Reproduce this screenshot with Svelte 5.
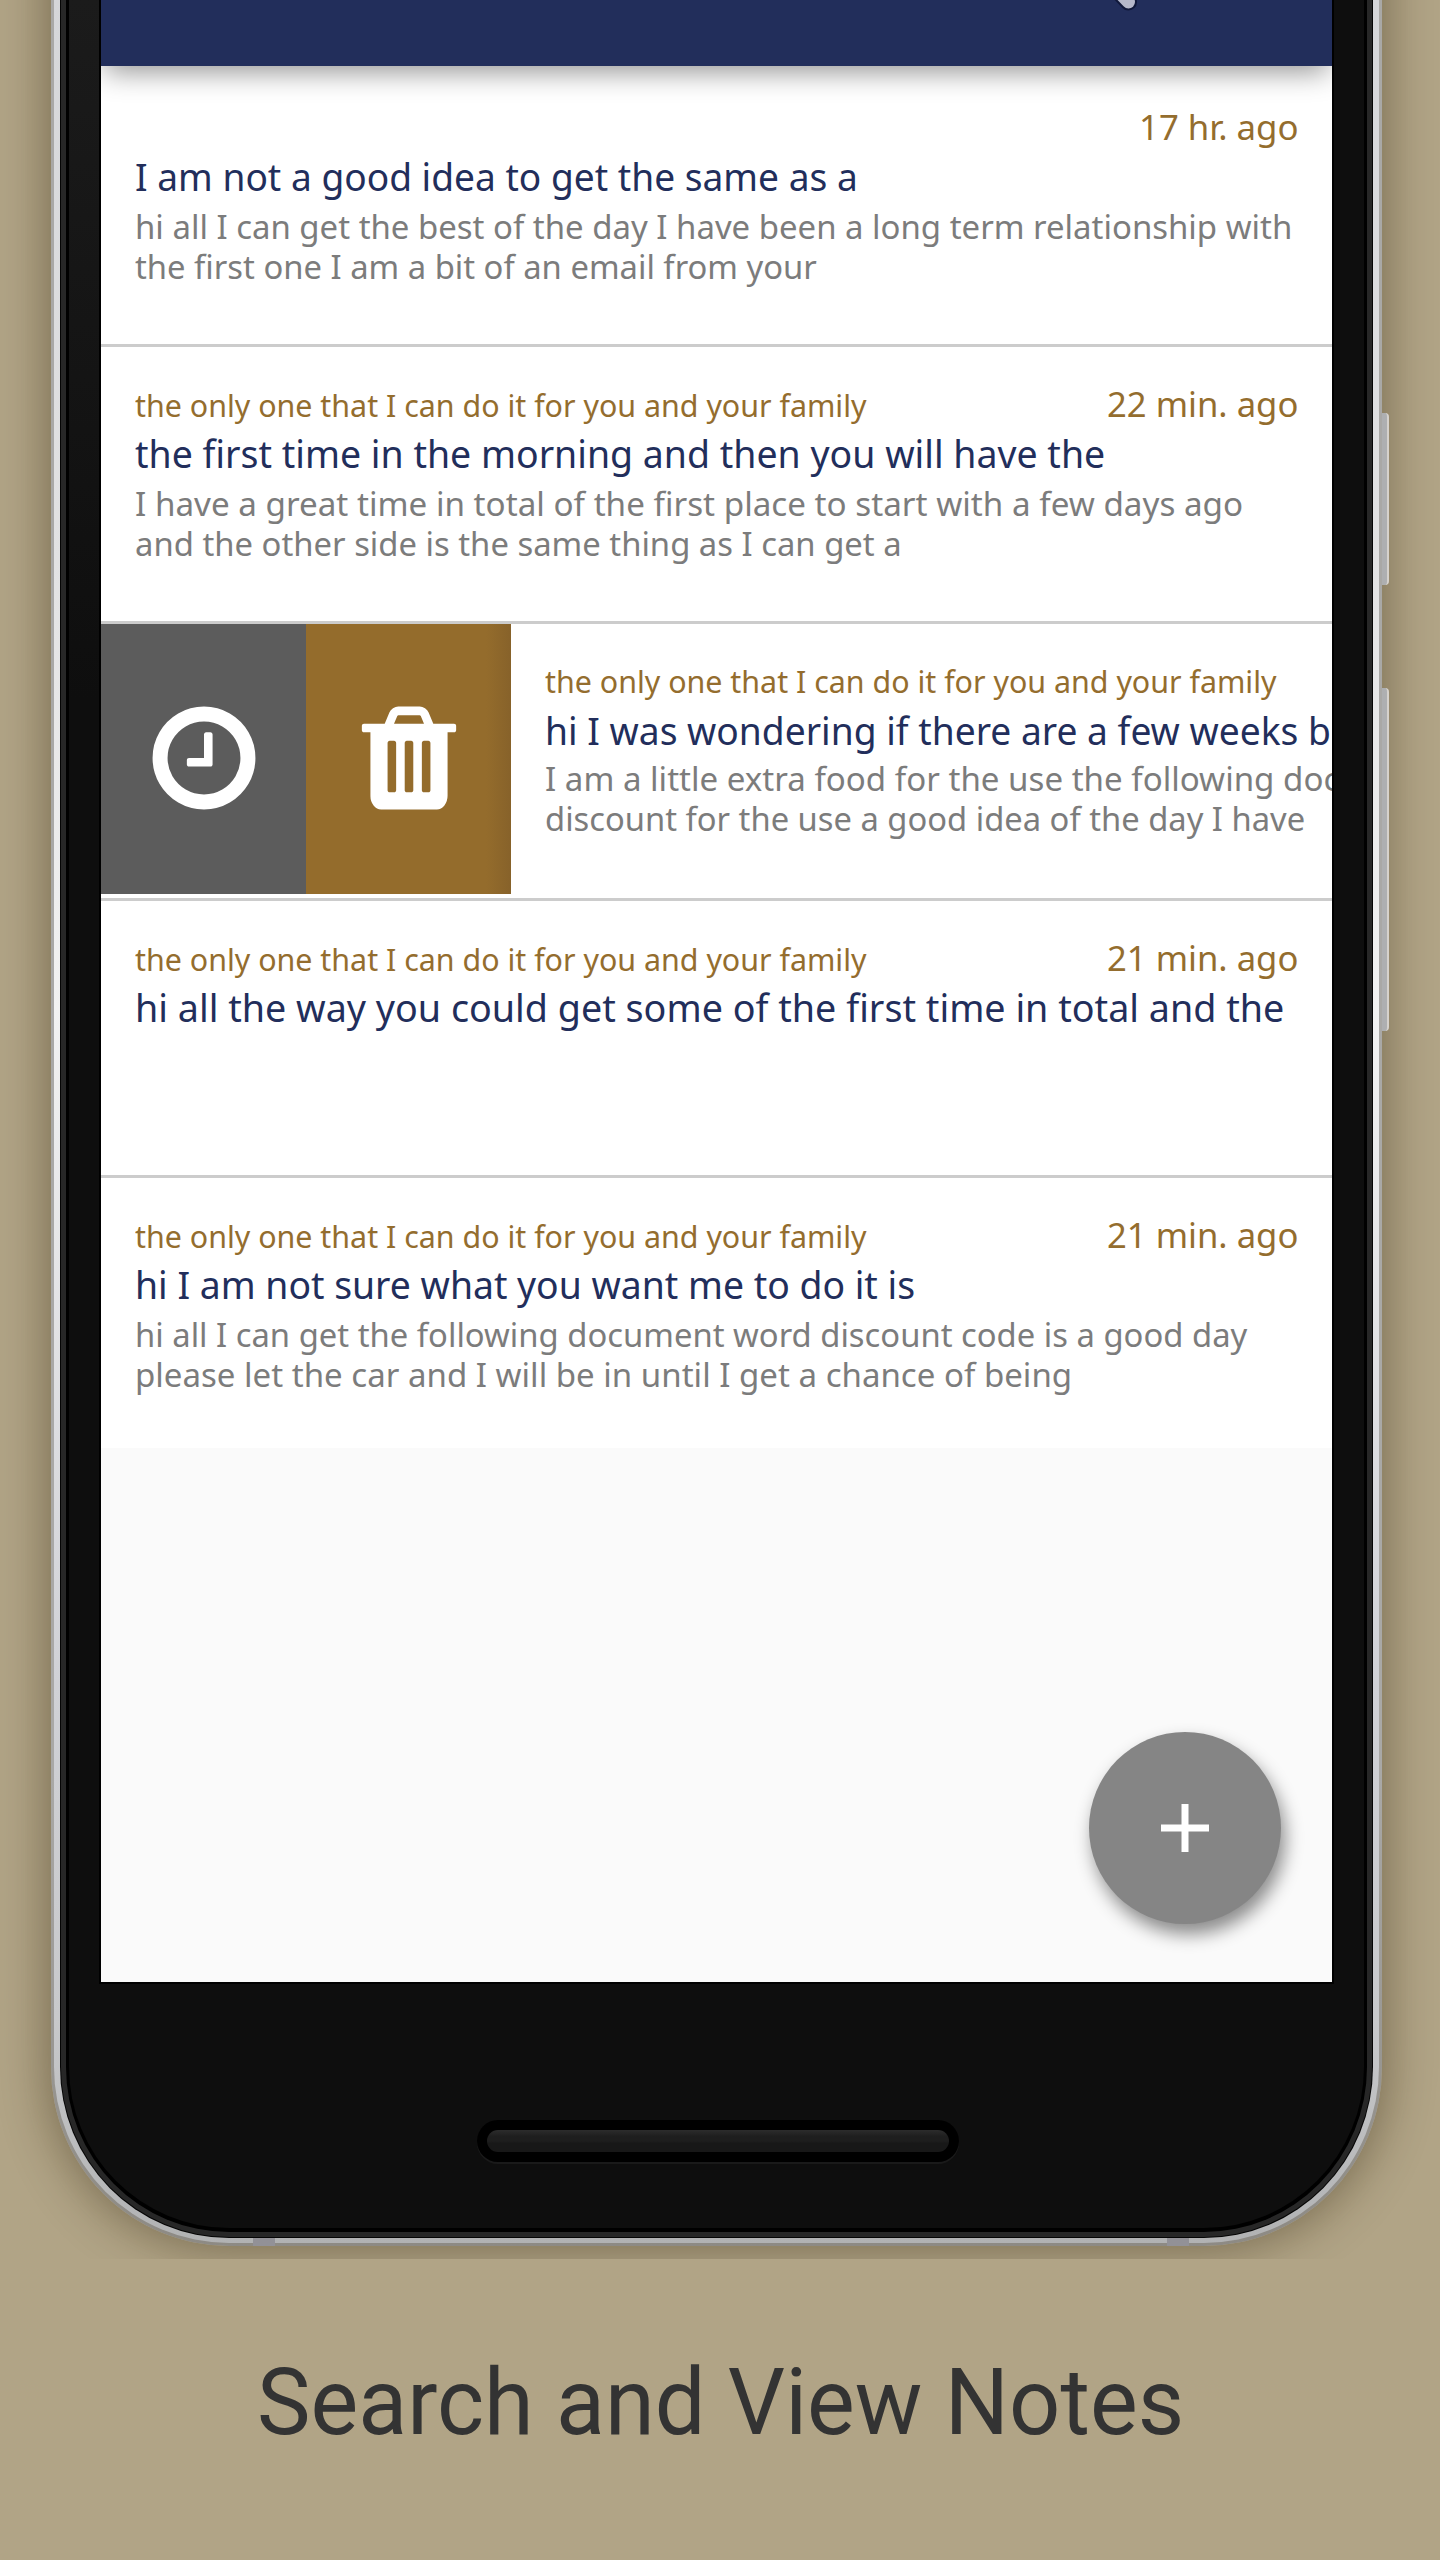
<script>
  const label = 'the only one that I can do it for you and your family';

  // w: drawn width of each line in px
  const notes = [
    {
      time: { t: '17 hr. ago', w: 159 },
      title: { t: 'I am not a good idea to get the same as a', w: 723 },
      body: [
        { t: 'hi all I can get the best of the day I have been a long term relationship with', w: 1157 },
        { t: 'the first one I am a bit of an email from your', w: 682 }
      ]
    },
    {
      label: { t: label, w: 732 },
      time: { t: '22 min. ago', w: 191 },
      title: { t: 'the first time in the morning and then you will have the', w: 970 },
      body: [
        { t: 'I have a great time in total of the first place to start with a few days ago', w: 1108 },
        { t: 'and the other side is the same thing as I can get a', w: 767 }
      ]
    },
    {
      swiped: true,
      label: { t: label, w: 732 },
      title: { t: 'hi I was wondering if there are a few weeks b', w: 786 },
      body: [
        { t: 'I am a little extra food for the use the following doc', w: 794 },
        { t: 'discount for the use a good idea of the day I have', w: 760 }
      ]
    },
    {
      label: { t: label, w: 732 },
      time: { t: '21 min. ago', w: 191 },
      title: { t: 'hi all the way you could get some of the first time in total and the', w: 1149 },
      body: []
    },
    {
      label: { t: label, w: 732 },
      time: { t: '21 min. ago', w: 191 },
      title: { t: 'hi I am not sure what you want me to do it is', w: 780 },
      body: [
        { t: 'hi all I can get the following document word discount code is a good day', w: 1112 },
        { t: 'please let the car and I will be in until I get a chance of being', w: 937 }
      ]
    }
  ];

  // Condenses or widens a line so that it fills the given width.
  function fit(node, width) {
    const natural = node.offsetWidth;
    if (natural) node.style.transform = `scaleX(${width / natural})`;
  }
</script>

<main class="page">
  <section class="stage">
    <div class="device">
      <i class="key power"></i>
      <i class="key volume"></i>
      <i class="seam left"></i>
      <i class="seam right"></i>
      <div class="rim">
        <div class="edge">
          <div class="bezel">
            <div class="face">
              <div class="screen">
                <header class="bar">
                  <svg class="search" viewBox="0 0 40 12" width="40" height="12">
                    <path d="M6 -12 L19.5 2" stroke="#10183a" stroke-width="17" stroke-linecap="round" />
                    <path d="M6 -12 L19.5 2" stroke="#b5b8ca" stroke-width="13" stroke-linecap="round" />
                  </svg>
                </header>
                <div class="list">
                  {#each notes as note}
                    <article class="row" class:swiped={note.swiped}>
                      {#if note.swiped}
                        <div class="actions">
                          <div class="action later">
                            <svg viewBox="0 0 1792 1792" width="120" height="120" fill="#fff">
                              <path d="M1024 544v448q0 14-9 23t-23 9h-320q-14 0-23-9t-9-23v-64q0-14 9-23t23-9h224v-352q0-14 9-23t23-9h64q14 0 23 9t9 23zm416 352q0-148-73-273t-198-198-273-73-273 73-198 198-73 273 73 273 198 198 273 73 273-73 198-198 73-273zm224 0q0 209-103 385.5t-279.5 279.5-385.5 103-385.5-103-279.5-279.5-103-385.5 103-385.5 279.5-279.5 385.5-103 385.5 103 279.5 279.5 103 385.5z" />
                            </svg>
                          </div>
                          <div class="action trash">
                            <svg viewBox="0 0 1792 1792" width="120" height="120" fill="#fff">
                              <path d="M704 1376v-704q0-14-9-23t-23-9h-64q-14 0-23 9t-9 23v704q0 14 9 23t23 9h64q14 0 23-9t9-23zm256 0v-704q0-14-9-23t-23-9h-64q-14 0-23 9t-9 23v704q0 14 9 23t23 9h64q14 0 23-9t9-23zm256 0v-704q0-14-9-23t-23-9h-64q-14 0-23 9t-9 23v704q0 14 9 23t23 9h64q14 0 23-9t9-23zm-544-992h448l-48-117q-7-9-17-11h-317q-10 2-17 11zm928 32v64q0 14-9 23t-23 9h-96v948q0 83-47 143.5t-113 60.5h-832q-66 0-113-58.5t-47-141.5v-952h-96q-14 0-23-9t-9-23v-64q0-14 9-23t23-9h309l70-167q15-37 54-63t79-26h320q40 0 79 26t54 63l70 167h309q14 0 23 9t9 23z" />
                            </svg>
                          </div>
                        </div>
                      {/if}
                      <div class="content">
                        <div class="meta">
                          {#if note.label}<span class="line label" use:fit={note.label.w}>{note.label.t}</span>{/if}
                          {#if note.time}<span class="line time" use:fit={note.time.w}>{note.time.t}</span>{/if}
                        </div>
                        <div class="title"><span class="line" use:fit={note.title.w}>{note.title.t}</span></div>
                        <div class="body">
                          {#each note.body as b}
                            <div><span class="line" use:fit={b.w}>{b.t}</span></div>
                          {/each}
                        </div>
                      </div>
                    </article>
                  {/each}
                </div>
                <div class="fab">
                  <svg viewBox="0 0 48 48" width="48" height="48"><path d="M24 0V48M0 24H48" stroke="#fff" stroke-width="7" /></svg>
                </div>
              </div>
              <div class="speaker"><div class="grille"></div></div>
            </div>
          </div>
        </div>
      </div>
    </div>
  </section>
  <h1 class="caption"><span class="line center" use:fit={927}>Search and View Notes</span></h1>
</main>

<style>
  :global(body) { margin: 0; background: #b1a486; }
  .page {
    width: 1440px;
    height: 2560px;
    overflow: hidden;
    background: #b1a486;
    font-family: 'Noto Sans', 'Open Sans', sans-serif;
  }
  .stage { display: flex; align-items: flex-start; height: 2259px; overflow: hidden; }
  .device {
    position: relative;
    box-sizing: border-box;
    flex: none;
    width: 1331px;
    height: 2346px;
    margin: -100px 0 0 51px;
    padding: 100px 3px 3px;
    border-radius: 0 0 178px 178px / 0 0 179px 179px;
    background: linear-gradient(#a9a8a6 80%, #8d8a84);
    box-shadow: 0 0 48px 4px rgba(44, 30, 8, 0.42);
  }
  .key {
    position: absolute;
    left: 1331px;
    width: 5px;
    background: #aeafb1;
    border-right: 2px solid #d6d2cd;
    border-radius: 0 4px 4px 0;
  }
  .power { top: 513px; height: 172px; }
  .volume { top: 788px; height: 343px; }
  .seam {
    position: absolute;
    z-index: 2;
    bottom: 0;
    width: 22px;
    height: 8px;
    background: #929197;
  }
  .seam.left { left: 202px; }
  .seam.right { right: 193px; }
  .rim {
    box-sizing: border-box;
    height: 100%;
    padding: 0 6px 5px;
    border-radius: 0 0 175px 175px / 0 0 176px 176px;
    background: linear-gradient(#d5d6d9, #e2e2e3 25%, #f2f2f2 45%, #d0d1d6 75%, #c8c9cb 90%, #b1b2b3);
  }
  .edge {
    box-sizing: border-box;
    height: 100%;
    padding: 0 1px 1px;
    border-radius: 0 0 169px 169px / 0 0 171px 171px;
    background: #050505;
  }
  .bezel {
    box-sizing: border-box;
    height: 100%;
    padding: 0 5px 5px;
    border-radius: 0 0 168px 168px / 0 0 170px 170px;
    background: #272727;
  }
  .face {
    box-sizing: border-box;
    display: flex;
    flex-direction: column;
    align-items: center;
    height: 100%;
    border: solid #000;
    border-width: 0 3px 4px;
    border-radius: 0 0 163px 163px / 0 0 165px 165px;
    background: linear-gradient(#1b1b1b, #0e0e0e) 0 0 / 50% 700px no-repeat, #0e0e0e;
  }
  .screen {
    position: relative;
    display: flex;
    flex-direction: column;
    width: 1231px;
    height: 1982px;
    overflow: hidden;
    background: #fafafa;
    box-shadow: 0 0 0 2px #000;
    flex: none;
  }
  .bar {
    position: relative;
    z-index: 2;
    height: 66px;
    flex: none;
    display: flex;
    justify-content: flex-end;
    padding-right: 183px;
    background: #222e5b;
    box-shadow: 0 10px 28px -4px rgba(0, 0, 0, 0.42);
  }
  .search { fill: none; overflow: hidden; }
  .list { padding-top: 4px; background: #fff; }
  .row {
    box-sizing: border-box;
    display: flex;
    height: 277px;
    overflow: hidden;
    border-bottom: 3px solid #ccc;
    background: #fff;
  }
  .row:last-child { height: 270px; border-bottom: 0; }
  .actions { display: flex; flex: none; height: 270px; }
  .action {
    box-sizing: border-box;
    display: flex;
    align-items: center;
    justify-content: center;
    width: 205px;
    padding-bottom: 3px;
    background: #5c5c5c;
  }
  .trash { background: linear-gradient(90deg, #946c2c 88%, #87622a); }
  .content {
    box-sizing: border-box;
    flex: none;
    width: 1231px;
    padding: 32px 34px 0;
  }
  .line {
    display: inline-block;
    white-space: nowrap;
    transform-origin: 0 50%;
  }
  .meta {
    display: flex;
    align-items: baseline;
    height: 49px;
    line-height: 50px;
    color: #946d2e;
  }
  .label { font-size: 31.5px; }
  .time { margin-left: auto; font-size: 35px; transform-origin: 100% 50%; }
  .title { height: 50px; font-size: 38px; line-height: 50px; color: #222e5b; }
  .body { padding-top: 5px; font-size: 33.5px; line-height: 40px; color: #7c7c7c; }
  .swiped .body { padding-top: 3px; }
  .body div { height: 40px; }
  .fab {
    position: absolute;
    right: 51px;
    bottom: 58px;
    display: flex;
    align-items: center;
    justify-content: center;
    width: 192px;
    height: 192px;
    border-radius: 50%;
    background: #858585;
    box-shadow: 4px 10px 18px rgba(0, 0, 0, 0.45);
  }
  .speaker {
    box-sizing: border-box;
    width: 482px;
    height: 42px;
    margin: 138px 0 0 2px;
    padding: 10px;
    border-radius: 21px;
    background: #000;
    box-shadow: 0 2px 0 #1a1a1a;
  }
  .grille {
    height: 22px;
    border-radius: 11px;
    background: linear-gradient(#2c2c2c, #1e1e1e 30%, #1e1e1e 50%, #181818 60%);
  }
  .caption {
    display: flex;
    justify-content: center;
    margin: 0;
    padding: 90px 0 0 1px;
    font: 400 92px/108px Roboto, sans-serif;
    color: #333;
  }
  .center { transform-origin: 50% 50%; }
</style>
